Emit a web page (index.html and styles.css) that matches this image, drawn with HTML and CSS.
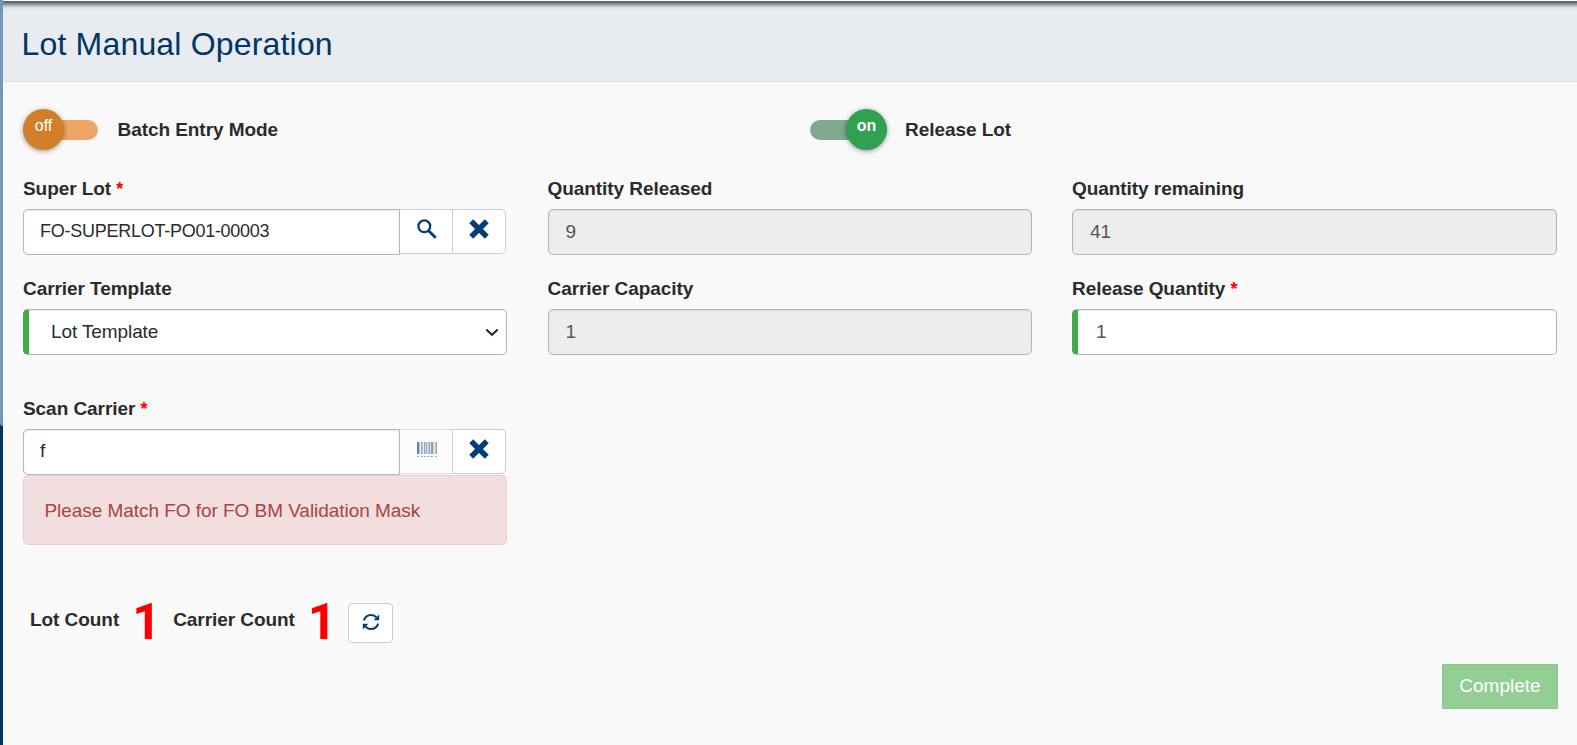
FILE: index.html
```html
<!DOCTYPE html>
<html lang="en">
<head>
<meta charset="utf-8">
<title>Lot Manual Operation</title>
<link rel="stylesheet" href="styles.css">
</head>
<body>
<aside class="rail"><div class="rail-thumb"></div></aside>
<main class="page">
  <header class="page-header"><h1>Lot Manual Operation</h1></header>
  <form class="content">
    <div class="toggles">
      <div class="toggle-item">
        <span class="toggle off"><span class="knob">off</span></span>
        <span class="label">Batch Entry Mode</span>
      </div>
      <div class="toggle-item">
        <span class="toggle on"><span class="knob">on</span></span>
        <span class="label release">Release Lot</span>
      </div>
    </div>
    <div class="grid">
      <div class="field">
        <div class="label">Super Lot <span class="req">*</span></div>
        <div class="group">
          <div class="input lot">FO-SUPERLOT-PO01-00003</div>
          <div class="addon">
            <svg width="20" height="20" viewBox="0 0 20 20"><circle cx="7.3" cy="7.3" r="5.9" fill="none" stroke="#043e78" stroke-width="2.3"/><path d="M11.6 11.8 18.7 18.8" stroke="#043e78" stroke-width="2.9"/></svg>
          </div>
          <div class="addon last">
            <svg width="20" height="20" viewBox="0 0 20 20"><path d="M2.2 2.2 17.8 17.8M17.8 2.2 2.2 17.8" stroke="#043e78" stroke-width="5.5"/></svg>
          </div>
        </div>
      </div>
      <div class="field">
        <div class="label">Quantity Released</div>
        <div class="input disabled">9</div>
      </div>
      <div class="field">
        <div class="label">Quantity remaining</div>
        <div class="input disabled">41</div>
      </div>
      <div class="field">
        <div class="label">Carrier Template</div>
        <div class="input valid select"><span>Lot Template</span>
          <svg width="14" height="9" viewBox="0 0 14 9"><path d="M1.3 1.5 7 6.8 12.7 1.5" fill="none" stroke="#2b2b2b" stroke-width="2.1"/></svg>
        </div>
      </div>
      <div class="field">
        <div class="label">Carrier Capacity</div>
        <div class="input disabled">1</div>
      </div>
      <div class="field">
        <div class="label">Release Quantity <span class="req">*</span></div>
        <div class="input valid number">1</div>
      </div>
    </div>
    <div class="field scan">
      <div class="label">Scan Carrier <span class="req">*</span></div>
      <div class="group">
        <div class="input">f</div>
        <div class="addon muted">
          <svg class="barcode" width="20" height="16" viewBox="0 0 20 16" shape-rendering="crispEdges" fill="#043e78"><path d="M0 0h20v12H0z" opacity=".22"/><path d="M0 0h2v12H0z" opacity=".55"/><path d="M4 0h1v12H4zM7 0h1v12H7zM12 0h1v12h-1zM14 0h2v12h-2zM19 0h1v12h-1z" opacity=".32"/><path d="M9 0h1v12H9z" opacity=".15"/><path d="M3 0h1v12H3zM6 0h1v12H6zM13 0h1v12h-1zM17 0h1v12h-1z" fill="#fcfcfc" opacity=".6"/><path d="M0 14h2v1H0zM4 14h2v1H4zM7 14h2v1H7zM10 14h2v1h-2zM13 14h3v1h-3zM18 14h2v1h-2z" opacity=".4"/></svg>
        </div>
        <div class="addon last">
          <svg width="20" height="20" viewBox="0 0 20 20"><path d="M2.2 2.2 17.8 17.8M17.8 2.2 2.2 17.8" stroke="#043e78" stroke-width="5.5"/></svg>
        </div>
      </div>
      <div class="alert">Please Match FO for FO BM Validation Mask</div>
    </div>
    <div class="counts">
      <span class="label lot-count">Lot Count</span><span class="num">1</span>
      <span class="label carrier-count">Carrier Count</span><span class="num">1</span>
      <span class="refresh">
        <svg width="18" height="18" viewBox="0 0 18 18"><path d="M1.8 7.4C3 3.8 5.8 2 9 2c2.300 0 4.200.9 5.700 2.700M16.200 10.600C15 14.200 12.200 16 9 16c-2.300 0-4.200-.9-5.700-2.700" fill="none" stroke="#043e78" stroke-width="2"/><path d="M17.200 1.500V7.300H11.600ZM.8 16.500V10.700H6.400Z" fill="#043e78"/></svg>
      </span>
    </div>
    <div class="actions"><span class="complete">Complete</span></div>
  </form>
</main>
</body>
</html>
```
FILE: styles.css
```css
* { box-sizing: border-box; }
body {
  margin: 0;
  height: 745px;
  display: flex;
  overflow: hidden;
  background: #f9f9f9;
  color: #2b2b2b;
  font-family: "Liberation Sans", Arial, sans-serif;
  font-size: 18px;
}
svg { display: block; }
.rail { width: 3px; background: #003262; }
.rail-thumb { height: 426px; background: #6f99be; border-bottom-left-radius: 3px; }
.page { flex: 1; }
.page-header {
  height: 82px;
  padding: 25px 0 0 18.5px;
  border-top: 1px solid #fff;
  border-bottom: 1px solid #dae0e5;
  background: linear-gradient(#595c5d 0, #737778 2px, #a3a8aa 4px, #d3d8db 6px, #e8ecf1 9px);
}
h1 {
  margin: 0;
  color: #003764;
  font-size: 32px;
  line-height: 36px;
  font-weight: 400;
  letter-spacing: .18px;
}
.content { padding: 26px 20px 0; }
.toggles { display: grid; grid-template-columns: 787px 1fr; height: 42px; }
.toggle-item { display: flex; align-items: center; }
.toggle {
  width: 75px;
  height: 20px;
  margin-top: 1px;
  border-radius: 10px;
  display: flex;
  align-items: center;
}
.toggle.off { background: #eda668; }
.toggle.on { width: 77px; background: #80a98d; justify-content: flex-end; }
.knob {
  width: 41px;
  height: 41px;
  flex: none;
  margin-top: -1px;
  border-radius: 50%;
  color: #fff;
  font-size: 16px;
  line-height: 33px;
  text-align: center;
  box-shadow: 0 1px 5px rgba(0, 0, 0, .4);
}
.off .knob { background: #d17f29; }
.on .knob { background: #32a052; font-weight: 700; }
.toggle + .label { margin: 2px 0 0 19.500px; }
.toggle + .release { margin-left: 18px; }
.label {
  font-weight: 700;
  font-size: 19px;
  line-height: 22px;
  letter-spacing: -.06px;
  white-space: nowrap;
}
.req { color: #f00; font-size: 18px; }
.grid {
  display: grid;
  grid-template-columns: 484px 484px 485px;
  column-gap: 40.5px;
  row-gap: 22px;
  margin-top: 27px;
}
.field > .label { height: 32px; padding-top: 1px; }
.input {
  height: 46px;
  padding: 0 17px;
  border: 1px solid #b5b5b5;
  border-radius: 5px;
  background: #fff;
  box-shadow: inset 0 1px 2px rgba(0, 0, 0, .08);
  font-size: 19px;
  line-height: 43px;
}
.disabled { background: #ededed; color: #555; }
.valid { border-left: 6px solid #42aa49; }
.number { color: #555; padding-left: 18px; }
.select {
  display: flex;
  align-items: center;
  justify-content: space-between;
  padding: 0 7px 0 22px;
  letter-spacing: -.1px;
}
.select span { line-height: 43px; margin-top: -2px; }
.group { display: flex; }
.group .input { width: 377px; padding-left: 16px; line-height: 42px; border-radius: 5px 0 0 5px; }
.group .lot { font-size: 18px; letter-spacing: -.26px; }
.addon {
  width: 53px;
  height: 45px;
  padding: 9px 0 0 17px;
  border: 1px solid #ccc;
  border-left: 0;
  background: #fff;
}
.addon.last { padding-left: 16px; border-radius: 0 5px 5px 0; }
.muted { background: #fcfcfc; border-color: #ddd #ccc #ddd; }
.barcode { margin-top: 3px; }
.scan { width: 484px; margin-top: 42px; }
.alert {
  height: 70px;
  padding-left: 20.5px;
  border: 1px solid #ebccd1;
  border-radius: 5px;
  background: #f2dede;
  color: #a94442;
  font-size: 19px;
  line-height: 69px;
  letter-spacing: -.05px;
}
.counts { display: flex; height: 40px; margin-top: 58px; padding-left: 7px; }
.counts .label { line-height: 33px; }
.num {
  width: 27px;
  margin-left: 13px;
  margin-right: 1px;
  color: #f00;
  font-family: Roboto, "Liberation Sans", sans-serif;
  font-size: 50px;
  line-height: 39px;
  font-weight: 700;
}
.carrier-count { margin-left: 13px; }
.refresh {
  width: 45px;
  height: 40px;
  margin-left: 12px;
  padding: 9px 0 0 13px;
  border: 1px solid #ccc;
  border-radius: 4px;
  background: #fff;
}
.actions { display: flex; justify-content: flex-end; margin-top: 21px; }
.complete {
  width: 116px;
  height: 45px;
  margin-right: -1px;
  border: 1px solid #89c98a;
  background: #93cf95;
  color: #fff;
  font-size: 19px;
  line-height: 41px;
  text-align: center;
}
```
